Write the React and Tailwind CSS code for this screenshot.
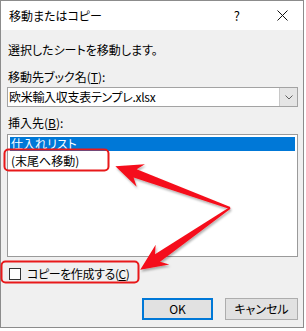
import React from 'react';

const jp = "font-['Noto_Sans_CJK_JP','Noto_Sans',sans-serif] [font-feature-settings:'palt']";

// arrow drawn along +x from tail (0,0) to tip (len,0)
const arrowPoints = (len) =>
  [
    [0, -1],
    [len - 21, -4.5],
    [len - 27, -12],
    [len, 0],
    [len - 27, 12],
    [len - 21, 4.5],
    [0, 1],
  ]
    .map((p) => p.join(','))
    .join(' ');

const Annotations = () => (
  <svg
    className="absolute left-0 top-0 pointer-events-none"
    width="306"
    height="331"
    viewBox="0 0 306 331"
  >
    <defs>
      <filter id="sh" x="-20%" y="-20%" width="140%" height="140%">
        <feDropShadow dx="1" dy="2" stdDeviation="1" floodColor="#000" floodOpacity="0.3" />
      </filter>
    </defs>
    <rect x="4.5" y="149.5" width="104" height="21" rx="4" fill="none" stroke="#e8191a" strokeWidth="2" />
    <rect x="1.5" y="261.5" width="137" height="21" rx="4" fill="none" stroke="#e8191a" strokeWidth="2" />
    <g filter="url(#sh)" fill="#f5111a">
      <polygon transform="translate(230 208) rotate(200.06)" points={arrowPoints(122)} />
      <polygon transform="translate(230 208) rotate(145.44)" points={arrowPoints(109)} />
    </g>
  </svg>
);

const App = () => {
  return (
    <div className={`relative w-[306px] h-[331px] bg-white text-[12px] text-black ${jp}`}>
      <div className="w-[304px] h-[328px] border border-[#8c8c8c] flex flex-col">
        {/* title bar */}
        <div className="h-[29px] bg-white flex items-center pl-[8px]">
          <span className="leading-none">移動またはコピー</span>
          <span className="ml-auto mr-[37px] leading-none text-[13px]">?</span>
          <svg width="11" height="11" viewBox="0 0 11 11" className="mr-[15px]">
            <path d="M0.5 0.5 L10.5 10.5 M10.5 0.5 L0.5 10.5" stroke="#111" strokeWidth="1" />
          </svg>
        </div>

        {/* body */}
        <div className="flex-1 bg-[#f0f0f0] pl-[6px] pr-[5px] flex flex-col">
          <div className="mt-[13px] h-[14px] leading-[14px] pl-[1px]">選択したシートを移動します。</div>

          <div className="mt-[13px] h-[14px] leading-[14px] pl-[1px]">
            移動先ブック名(<span className="underline">T</span>):
          </div>

          <div className="mt-[3px] h-[20px] bg-white border border-[#a3a3a3] flex items-stretch">
            <div className="flex-1 flex items-center pl-[1px] leading-none tracking-[-0.3px]">欧米輸入収支表テンプレ.xlsx</div>
            <div className="w-[18px] bg-[#e5e5e5] border-l border-[#c8c8c8] flex items-center justify-center">
              <svg width="8" height="5" viewBox="0 0 8 5">
                <path d="M0.5 0.5 L4 4 L7.5 0.5" fill="none" stroke="#606060" strokeWidth="1" />
              </svg>
            </div>
          </div>

          <div className="mt-[9px] h-[14px] leading-[14px] pl-[1px]">
            挿入先(<span className="underline">B</span>):
          </div>

          <div className="mt-[4px] h-[123px] bg-white border border-[#9a9a9a] p-[2px]">
            <div className="h-[14px] leading-[14px] bg-[#0078d7] text-white pl-[1px]">仕入れリスト</div>
            <div className="mt-[2px] h-[15px] leading-[15px] pl-[1px]">(末尾へ移動)</div>
          </div>

          <div className="mt-[11px] h-[12px] flex items-center">
            <div className="ml-[2px] w-[12px] h-[12px] bg-white border border-[#333]" />
            <span className="ml-[6px] leading-none tracking-[-0.4px]">
              コピーを作成する(<span className="underline">C</span>)
            </span>
          </div>

          <div className="mt-[18px] flex justify-end gap-[12px]">
            <button className="w-[71px] h-[22px] bg-[#e1e1e1] border-2 border-[#0078d7] leading-none">OK</button>
            <button className="w-[73px] h-[22px] bg-[#e1e1e1] border border-[#adadad] leading-none">キャンセル</button>
          </div>
        </div>
      </div>
      <Annotations />
    </div>
  );
};

export default App;
